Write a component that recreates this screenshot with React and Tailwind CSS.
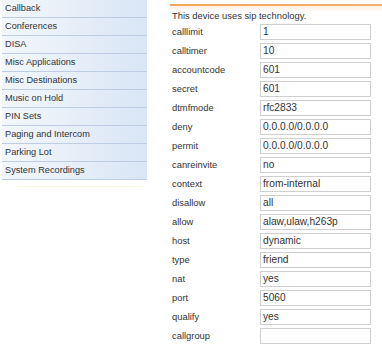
import React from "react";

const menu = [
  "Callback",
  "Conferences",
  "DISA",
  "Misc Applications",
  "Misc Destinations",
  "Music on Hold",
  "PIN Sets",
  "Paging and Intercom",
  "Parking Lot",
  "System Recordings",
];

const rows = [
  ["calllimit", "1"],
  ["calltimer", "10"],
  ["accountcode", "601"],
  ["secret", "601"],
  ["dtmfmode", "rfc2833"],
  ["deny", "0.0.0.0/0.0.0.0"],
  ["permit", "0.0.0.0/0.0.0.0"],
  ["canreinvite", "no"],
  ["context", "from-internal"],
  ["disallow", "all"],
  ["allow", "alaw,ulaw,h263p"],
  ["host", "dynamic"],
  ["type", "friend"],
  ["nat", "yes"],
  ["port", "5060"],
  ["qualify", "yes"],
  ["callgroup", ""],
];

export default function App() {
  return (
    <div className="w-[382px] h-[352px] bg-white flex overflow-hidden font-['Liberation_Sans',Arial,sans-serif] text-[#333]">
      <div className="w-[147px] pl-[2px] shrink-0">
        {menu.map((m) => (
          <div
            key={m}
            className="h-[18px] border-b border-[#bccde5] bg-gradient-to-r from-[#f3f7fc] to-[#d9e6f5] pl-[3px] text-[9.2px] leading-[17px] text-[#333]"
          >
            {m}
          </div>
        ))}
        <div className="mt-[6px] ml-[15px] h-px w-[126px] bg-[#fbf5e0]" />
      </div>
      <div className="ml-[23px] flex-1">
        <div className="mt-[4px] h-[2px] bg-gradient-to-r from-[#f2a65e] to-[#f5b070]" />
        <div className="h-[18px] pl-[2px] pt-[2px] bg-gradient-to-b from-[#fdf0e2] via-white via-[35%] to-white text-[9.4px] leading-[16px]">
          This device uses sip technology.
        </div>
        {rows.map(([label, value]) => (
          <div key={label} className="h-[19px] flex items-start pl-[2px]">
            <div className="w-[88px] text-[9.4px] leading-[16px]">{label}</div>
            <div className="w-[111px] h-[16px] border border-[#cfcfcf] px-[2px] text-[10.2px] leading-[14px] text-[#333]">
              {value}
            </div>
          </div>
        ))}
      </div>
    </div>
  );
}
